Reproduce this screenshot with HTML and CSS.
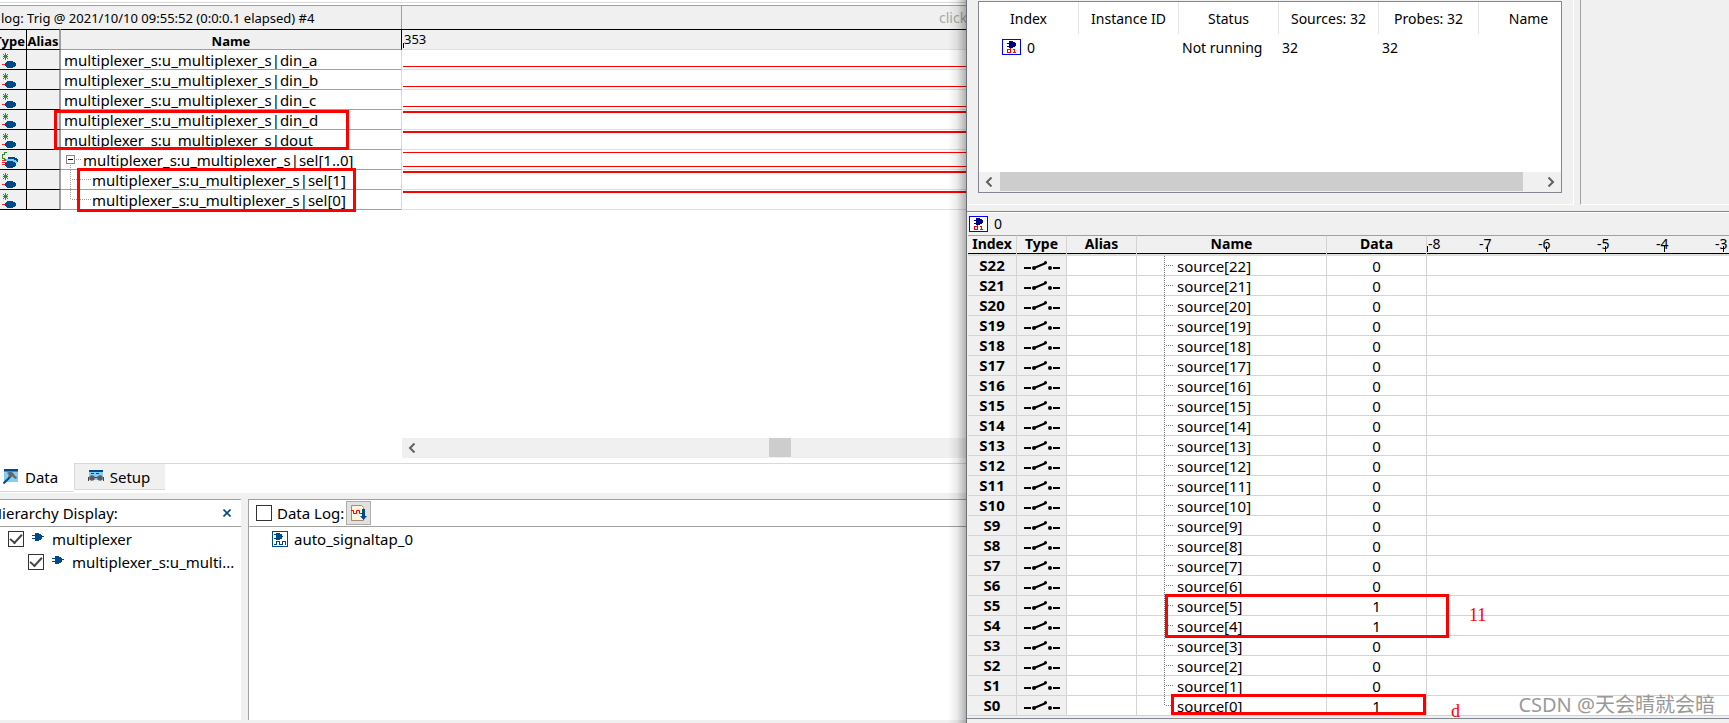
FILE: index.html
```
<!DOCTYPE html>
<html lang="en">
<head>
<meta charset="utf-8">
<title>Signal Tap</title>
<link rel="stylesheet" href="styles.css">
</head>
<body>
<svg class="defs" aria-hidden="true">
  <symbol id="node" viewBox="0 0 16 19" shape-rendering="crispEdges">
    <path d="M3 3h1v7H3zM1 6h5v1H1zM2 5h1v1H2zM1 4h1v1H1zM4 5h1v1H4zM5 4h1v1H5zM2 7h1v1H2zM1 8h1v1H1zM4 7h1v1H4zM5 8h1v1H5z" fill="#2e8b2e"/>
    <path d="M0 14.500h4" stroke="#f22"/>
    <path d="M5 11h6v1h2v1h1v3h-1v1h-2v1H5v-1H4v-1H3v-3h1v-1h1z" fill="#004a8a"/>
  </symbol>
  <symbol id="bus" viewBox="0 0 16 19" shape-rendering="crispEdges">
    <path d="M5 2.500H2V4H.500v4H2v1.500h1.500" stroke="#2e8b2e" fill="none"/>
    <path d="M6 7h7v1h2v1h1v3h-2v-2H6z" fill="#004a8a"/>
    <path d="M4 9h8v1h2v1h1v2h-2v-1h-2v-1H4z" fill="#7fcdf5"/>
    <path d="M0 10.500h4M0 12.500h4M0 14.500h4" stroke="#f22"/>
    <path d="M5 11h6v1h2v1h1v3h-1v1h-2v1H5v-1H4v-1H3v-3h1v-1h1z" fill="#004a8a"/>
  </symbol>
  <symbol id="switch" viewBox="0 0 36 12">
    <path d="M0 8h7M29 8h7" stroke="#000" stroke-width="2"/>
    <path d="M10 8L22 3" stroke="#000" stroke-width="2"/>
    <circle cx="10" cy="8" r="2"/><circle cx="26" cy="8" r="2"/><circle cx="21.500" cy="2.500" r="1.500"/>
  </symbol>
  <symbol id="probe" viewBox="0 0 19 16" shape-rendering="crispEdges">
    <path d="M.5.5h18v15H.5z" fill="#fff" stroke="#00f"/>
    <path d="M7 2h4v1h2v1h1v3h-1v1h-2v1H7V8H5V7h2V5H5V4h2z" fill="#000080"/>
    <path d="M5.500 10.500h3v3h-3zM8.500 9v5M11 10.500h1.500V14M11 13.500h3" stroke="#f00" fill="none"/>
  </symbol>
  <symbol id="plug" viewBox="0 0 12 8" shape-rendering="crispEdges">
    <path d="M3 0h4v1h2v1h1v1h2v1h-2v2H9v1H7v1H3V6H0V5h3V3H0V2h3z" fill="#004a8a"/>
  </symbol>
  <symbol id="left" viewBox="0 0 8 10"><path d="M6.500 .5L2 5l4.500 4.500" stroke="#606060" stroke-width="2" fill="none"/></symbol>
  <symbol id="right" viewBox="0 0 8 10"><path d="M1.500 .5L6 5 1.500 9.500" stroke="#606060" stroke-width="2" fill="none"/></symbol>
</svg>
<div class="desk">
  <main class="tap">
    <div class="titlebar"><span class="trig">log: Trig @ 2021/10/10 09:55:52 (0:0:0.1 elapsed) #4</span><span class="hint">click</span></div>
    <section class="waves">
      <table class="signals">
        <colgroup><col class="w-type"><col class="w-al"><col class="w-name"><col></colgroup>
        <thead><tr><th><span class="clip">Type</span></th><th>Alias</th><th>Name</th><th class="time">353</th></tr></thead>
        <tbody>
          <tr><td><svg class="i-node"><use href="#node"/></svg></td><td></td><td>multiplexer_s:u_multiplexer_s|din_a</td><td class="low"></td></tr>
          <tr><td><svg class="i-node"><use href="#node"/></svg></td><td></td><td>multiplexer_s:u_multiplexer_s|din_b</td><td class="low"></td></tr>
          <tr><td><svg class="i-node"><use href="#node"/></svg></td><td></td><td>multiplexer_s:u_multiplexer_s|din_c</td><td class="low"></td></tr>
          <tr><td><svg class="i-node"><use href="#node"/></svg></td><td></td><td>multiplexer_s:u_multiplexer_s|din_d</td><td class="high"></td></tr>
          <tr><td><svg class="i-node"><use href="#node"/></svg></td><td></td><td>multiplexer_s:u_multiplexer_s|dout</td><td class="high"></td></tr>
          <tr><td><svg class="i-node"><use href="#bus"/></svg></td><td></td><td><span class="tree"><svg class="branch" viewBox="0 0 17 19" shape-rendering="crispEdges"><path d="M.5 5.500h8v8h-8z" fill="#fff" stroke="#888"/><path d="M2 9.500h5" stroke="#000"/><path d="M10 9.500h6M4.500 15v4" stroke="#999" stroke-dasharray="1 1"/></svg><span>multiplexer_s:u_multiplexer_s|sel[1..0]</span></span></td><td class="busw"></td></tr>
          <tr><td><svg class="i-node"><use href="#node"/></svg></td><td></td><td><span class="tree kid"><svg class="branch" viewBox="0 0 17 19" shape-rendering="crispEdges"><path d="M4.500 0v19M6 9.500h19" stroke="#999" stroke-dasharray="1 1"/></svg><span>multiplexer_s:u_multiplexer_s|sel[1]</span></span></td><td class="high"></td></tr>
          <tr><td><svg class="i-node"><use href="#node"/></svg></td><td></td><td><span class="tree kid"><svg class="branch" viewBox="0 0 17 19" shape-rendering="crispEdges"><path d="M4.500 0v10M6 9.500h19" stroke="#999" stroke-dasharray="1 1"/></svg><span>multiplexer_s:u_multiplexer_s|sel[0]</span></span></td><td class="high"></td></tr>
        </tbody>
      </table>
      <div class="mark m-din"></div>
      <div class="mark m-sel"></div>
      <div class="hscroll wave-scroll"><button aria-label="Scroll left"><svg><use href="#left"/></svg></button><i class="thumb"></i></div>
    </section>
    <nav class="tabs">
      <button class="tab on"><svg viewBox="0 0 16 16"><path d="M1 1h14v12H1z" fill="#85cdf2"/><path d="M1 0h14v2.500H1z" fill="#004a8a"/><path d="M.5 14.500L8 7" stroke="#004a8a" stroke-width="2"/><path d="M4 4l2-1h3l2 2 1 2 2 1-1 2-2-1-2-2-2 2-2-2 1-1z" fill="#666"/></svg>Data</button>
      <button class="tab"><svg viewBox="0 0 16 16"><path d="M1 1h14v10H1z" fill="#85cdf2"/><path d="M1 1h14v2H1z" fill="#004a8a"/><path d="M3 4.500h3M8 4.500h3" stroke="#004a8a"/><path d="M.5 8v4M15.500 8v4M6 8.500h4" stroke="#444"/><circle cx="4" cy="9" r="2.700" fill="#5c5c5c"/><circle cx="12" cy="9" r="2.700" fill="#5c5c5c"/></svg>Setup</button>
    </nav>
    <section class="panels">
      <div class="hier">
        <header><span class="cut">Hierarchy Display:</span><button class="close" aria-label="Close"><svg viewBox="0 0 8 8"><path d="M.5.5l7 7M7.500.5l-7 7" stroke="#004a8a" stroke-width="1.600"/></svg></button></header>
        <label class="node"><input type="checkbox" checked><svg class="i-plug"><use href="#plug"/></svg>multiplexer</label>
        <label class="node sub"><input type="checkbox" checked><svg class="i-plug"><use href="#plug"/></svg><span>multiplexer_s:u_multi...</span></label>
      </div>
      <div class="log">
        <header><label><input type="checkbox">Data Log:</label><button class="tool" aria-label="Save data log"><svg viewBox="0 0 16 16"><path d="M.5.5h10l2 2v13H.5z" fill="#fdf6dc" stroke="#a08c78"/><path d="M0 5.500h2.500v3h3v-3h3v3H11" fill="none" stroke="#f00"/><path d="M11 4h3v7h2l-3.500 4L9 11h2z" fill="#004a8a"/></svg></button></header>
        <div class="entry"><svg viewBox="0 0 16 16" shape-rendering="crispEdges"><path d="M.5.5h15v15H.5z" fill="#fff" stroke="#004a8a"/><path d="M4 2h4v1h2v2h1v1h-1v2H8v1H4V8H2V7h2V4H2V3h2z" fill="#004a8a"/><path d="M2 13.500h2.500v-3h3v3h3v-3h3v3" fill="none" stroke="#004a8a"/></svg>auto_signaltap_0</div>
      </div>
    </section>
  </main>
  <aside class="probe">
    <section class="top">
      <div class="pane">
        <div class="list">
          <table class="inst">
            <thead><tr><th>Index</th><th>Instance ID</th><th>Status</th><th>Sources: 32</th><th>Probes: 32</th><th>Name</th></tr></thead>
            <tbody><tr><td><span class="idx"><svg class="i-probe"><use href="#probe"/></svg>0</span></td><td></td><td>Not running</td><td>32</td><td>32</td><td></td></tr></tbody>
          </table>
          <div class="hscroll"><button aria-label="Scroll left"><svg><use href="#left"/></svg></button><i class="thumb"></i><button aria-label="Scroll right"><svg><use href="#right"/></svg></button></div>
        </div>
      </div>
      <div class="blank"></div>
    </section>
    <section class="bottom">
      <div class="caption"><svg class="i-probe"><use href="#probe"/></svg>0</div>
      <div class="gridwrap">
        <table class="sources">
          <colgroup><col class="c1"><col class="c2"><col class="c3"><col class="c4"><col class="c5"><col></colgroup>
          <thead><tr><th>Index</th><th>Type</th><th>Alias</th><th>Name</th><th>Data</th><th class="ruler"><div><span>-8</span><span>-7</span><span>-6</span><span>-5</span><span>-4</span><span>-3</span></div></th></tr></thead>
          <tbody id="rows"></tbody>
        </table>
        <div class="mark m-45"></div><div class="mark m-0"></div>
        <span class="note n-11">11</span><span class="note n-d">d</span>
        <span class="stamp">CSDN @天会晴就会暗</span>
      </div>
    </section>
  </aside>
</div>
<script src="rows.js"></script>
</body>
</html>
```
FILE: rows.js
```
const body = document.getElementById('rows');
const ones = [0, 4, 5];
for (let n = 22; n >= 0; n--) {
  const stem = n ? 20 : 10;
  body.insertAdjacentHTML('beforeend', `<tr><td>S${n}</td><td><svg class="i-switch"><use href="#switch"/></svg></td><td></td><td><span class="src"><svg viewBox="0 0 10 19" shape-rendering="crispEdges"><path d="M.5 0v${stem}M2 9.500h8" stroke="#777" stroke-dasharray="1 1"/></svg><span>source[${n}]</span></span></td><td>${ones.includes(n) ? 1 : 0}</td><td></td></tr>`);
}
```
FILE: styles.css
```
* { box-sizing: border-box; }
body { margin: 0; font: 15px/20px "Noto Sans", "Noto Sans CJK SC", sans-serif; color: #000; background: #fff; overflow: hidden; }
button { border: 0; padding: 0; background: none; font: inherit; color: inherit; display: flex; align-items: center; justify-content: center; }
table { border-collapse: separate; border-spacing: 0; table-layout: fixed; width: 100%; }
td, th { padding: 0; white-space: nowrap; overflow: hidden; }
svg { display: block; flex: none; }
.defs { position: absolute; width: 0; height: 0; }
.desk { display: grid; grid-template-columns: 966fr 763fr; height: 100vh; }
.tap { display: flex; flex-direction: column; min-width: 0; overflow: hidden; position: relative; }
.tap::after { content: ""; position: absolute; top: 0; right: 0; bottom: 0; width: 18px; background: linear-gradient(to right, rgba(0,0,0,0), rgba(0,0,0,.08) 50%, rgba(0,0,0,.3)); }

.titlebar { display: flex; justify-content: space-between; margin-top: 2px; border-top: 1px solid #d9d9d9; padding-top: 2px; height: 27px; font-size: 13px; line-height: 26px; background: linear-gradient(#fff 2px, #a0a0a0 2px, #a0a0a0 3px, #f0f0f0 3px); }
.trig { width: 402px; padding-left: 1px; border-right: 1px solid #a0a0a0; white-space: nowrap; }
.hint { width: 27px; color: #a8a8a8; font-size: 14px; white-space: nowrap; overflow: hidden; }
.waves { position: relative; display: flex; flex-direction: column; flex: 0 0 434px; }
.w-type { width: 27px; } .w-al { width: 34px; } .w-name { width: 341px; }
.signals th { height: 21px; font-size: 13px; line-height: 16px; padding-top: 3px; background: #f0f0f0; border-top: 1px solid #000; border-bottom: 1px solid #a0a0a0; border-right: 1px solid #000; }
.signals th:nth-child(2) { border-right: 2px solid #a0a0a0; }
.signals th:nth-child(-n+2) { border-bottom-color: #000; }
.signals th.time { text-align: left; font-weight: 400; padding: 0 0 2px 2px; border-right: 0; border-bottom-color: #e0e0e0; background: linear-gradient(#000, #000) 1px 13px / 1px 5px no-repeat #f0f0f0; }
.clip { display: flex; justify-content: flex-end; padding-right: 1px; }
.signals td { height: 20px; line-height: 19px; border-bottom: 1px solid #a0a0a0; }
.signals td:nth-child(-n+2) { background: #f0f0f0; border-bottom-color: #000; border-right: 1px solid #000; }
.signals td:nth-child(2) { border-right: 2px solid #a0a0a0; }
.signals td:nth-child(3) { padding-left: 3px; line-height: 17px; padding-top: 2px; border-right: 1px solid #d9d9d9; }
.signals td:nth-child(4) { border-bottom-color: #e0e0e0; border-left: 1px solid #fff; background-clip: padding-box; }
.low { background: linear-gradient(#f00, #f00) 0 16px / 100% 1px no-repeat; }
.high { background: linear-gradient(#f00, #f00) 0 1px / 100% 2px no-repeat; }
.busw { background: linear-gradient(#f00, #f00) 0 2px / 100% 1px no-repeat, linear-gradient(#f00, #f00) 0 16px / 100% 1px no-repeat; }
.i-node { width: 16px; height: 19px; margin-left: 2px; }
.tree { display: flex; align-items: flex-end; padding-left: 2px; margin-top: -2px; }
.tree.kid { gap: 9px; }
.branch { width: 17px; height: 19px; overflow: visible; }
.mark { position: absolute; border: 3px solid #f00; }
.m-din { left: 54px; top: 81px; width: 295px; height: 40px; }
.m-sel { left: 77px; top: 139px; width: 279px; height: 44px; }

.hscroll { display: flex; align-items: stretch; height: 20px; background: #f0f0f0; }
.hscroll button { width: 20px; }
.hscroll button svg { width: 8px; height: 10px; }
.thumb { background: #cdcdcd; }
.wave-scroll { margin: auto 0 5px 402px; }
.wave-scroll .thumb { width: 22px; margin: 0 0 1px 347px; }

.tabs { display: flex; align-items: flex-start; height: 30px; background: linear-gradient(#d9d9d9 1px, #fff 1px); }
.tab { gap: 6px; height: 27px; width: 91px; padding-right: 2px; background: #f0f0f0; border: 1px solid #d9d9d9; border-right: 0; }
.tab svg { width: 16px; height: 16px; }
.tab.on { height: 29px; width: 74px; background: #fff; border: 0; border-bottom: 1px solid #d9d9d9; justify-content: flex-start; padding-left: 3px; }
.panels { display: grid; grid-template-columns: 241px minmax(0, 1fr); column-gap: 7px; flex: 1; padding: 6px 0 3px; background: #f0f0f0; }
.hier, .log { background: #fff; border-top: 1px solid #a0a0a0; min-width: 0; overflow: hidden; }
.log { border-left: 1px solid #a0a0a0; }
.panels header { display: flex; align-items: center; height: 27px; border-bottom: 1px solid #a0a0a0; }
.hier header { justify-content: space-between; padding-right: 10px; }
.cut { margin-left: -9px; }
.close svg { width: 8px; height: 8px; }
.node, .entry { display: flex; align-items: center; height: 23px; padding-left: 8px; }
.node.sub { padding-left: 28px; }
.i-plug { width: 12px; height: 8px; margin: 0 8px 3px; }
input[type=checkbox] { appearance: none; width: 16px; height: 16px; margin: 0; border: 1px solid #333; background: #fff; flex: none; display: grid; place-items: center; }
input:checked::after { content: ""; width: 10px; height: 5px; border: solid #444; border-width: 0 0 2px 2px; transform: rotate(-48deg); margin-bottom: 3px; }
.log header { gap: 2px; padding-left: 7px; }
.log label { display: flex; align-items: center; gap: 5px; }
.tool { width: 25px; height: 24px; background: #e1e1e1; border: 1px solid #adadad; }
.tool svg { width: 16px; height: 16px; }
.entry { gap: 6px; padding-left: 23px; }
.entry svg { width: 16px; height: 16px; }

.probe { position: relative; display: flex; flex-direction: column; min-width: 0; background: #f0f0f0; border-left: 1px solid #6b7075; overflow: hidden; }
.top { display: flex; height: 205px; flex: none; }
.pane { width: 607px; padding: 1px 11px 11px; border-right: 1px solid #fff; border-bottom: 1px solid #fff; }
.list { display: flex; flex-direction: column; justify-content: space-between; height: 192px; background: #fff; border: 1px solid #828790; overflow: hidden; }
.blank { flex: 1; margin-left: 6px; border-left: 1px solid #a0a0a0; border-bottom: 1px solid #fff; }
.inst { width: 600px; }
.inst th { height: 32px; padding-top: 2px; font-weight: 400; font-size: 14px; border-right: 1px solid #e5e5e5; }
.inst td { height: 28px; font-size: 14px; padding-left: 3px; }
.inst td:first-child { padding-left: 23px; }
.idx, .caption { display: flex; align-items: center; gap: 6px; }
.idx svg { margin-bottom: 3px; }
.i-probe { width: 19px; height: 16px; }
.list .thumb { flex: 1; margin: 0 18px 1px 1px; }
.bottom { display: flex; flex-direction: column; margin-top: 6px; border-top: 1px solid #828790; border-bottom: 1px solid #828790; padding: 0 0 2px 1px; }
.caption { height: 23px; padding-left: 1px; border-top: 1px solid #fff; font-size: 14px; }
.gridwrap { position: relative; }
.c1 { width: 49px; } .c2 { width: 50px; } .c3 { width: 70px; } .c4 { width: 190px; } .c5 { width: 100px; }
.sources th { height: 21px; font-size: 14px; line-height: 16px; padding-bottom: 2px; background: linear-gradient(#000, #000) 0 100% / 100% 1px no-repeat; background-clip: padding-box; border-top: 1px solid #a0a0a0; border-bottom: 2px solid #dcdfd8; border-right: 1px solid #d4d4d4; }
.sources th.ruler { font-weight: 400; text-align: left; border-right: 0; }
.ruler div { display: flex; }
.ruler span { flex: 0 0 59px; text-indent: -7px; background: linear-gradient(#000, #000) 1px 100% / 1px 6px no-repeat; }
.ruler span:first-child { text-indent: 1px; background-position: 0 100%; }
.sources td { height: 20px; line-height: 17px; padding-top: 2px; font-size: 15px; text-align: center; background: #fff; border-right: 1px solid #d4d4d4; border-bottom: 1px solid #d4d4d4; }
.sources td:nth-child(-n+2) { padding-top: 0; line-height: 19px; background: #f0f0f0; }
.sources td:first-child { font-weight: 700; }
.sources td:last-child { border-right: 0; }
.i-switch { width: 36px; height: 12px; margin: 0 auto; }
.src { display: flex; align-items: flex-end; gap: 3px; padding-left: 27px; margin-top: -2px; }
.src svg { width: 10px; height: 19px; }
.m-45 { left: 197px; top: 359px; width: 284px; height: 44px; }
.m-0 { left: 203px; top: 459px; width: 255px; height: 21px; }
.note { position: absolute; color: #f00; font: 18px/20px "Liberation Serif", serif; }
.n-11 { left: 501px; top: 370px; }
.n-d { left: 483px; top: 466px; }
.stamp { position: absolute; right: 14px; top: 456px; font-size: 20px; line-height: 28px; color: #999; white-space: nowrap; }
```
